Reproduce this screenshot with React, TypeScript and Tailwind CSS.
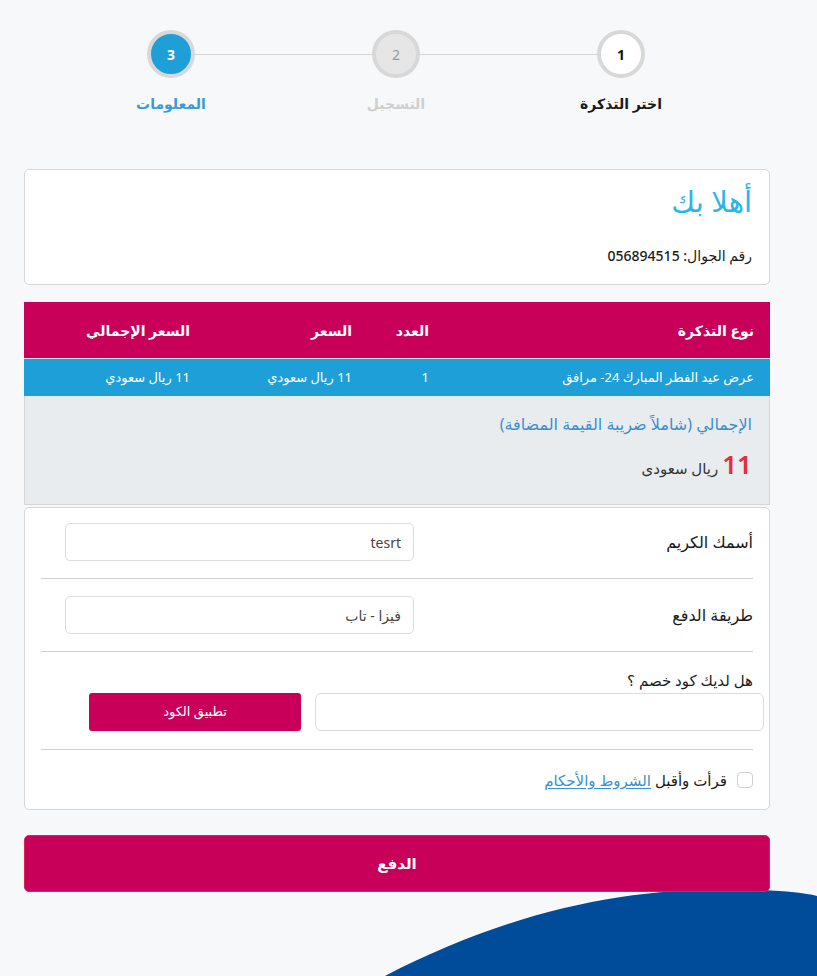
import React from 'react';

const steps = [
  { n: 1, label: 'اختر التذكرة', circle: 'bg-white text-[#111]', text: 'text-[#1a1a1a]' },
  { n: 2, label: 'التسجيل', circle: 'bg-[#e6e6e6] text-[#9a9a9a] font-normal', text: 'text-[#cfcfcf]' },
  { n: 3, label: 'المعلومات', circle: 'bg-[#1e9fd8] text-white', text: 'text-[#3a9ad9]' },
];

function Stepper() {
  return (
    <div className="pt-[30px] pr-[172px]">
      <div className="flex items-center">
        {steps.map((s, i) => (
          <React.Fragment key={s.n}>
            <div className={`w-[48px] h-[48px] shrink-0 rounded-full border-4 border-[#d8d8d8] flex items-center justify-center text-[14px] font-bold ${s.circle}`}>
              {s.n}
            </div>
            {i < steps.length - 1 && <div className="w-[177px] h-px bg-[#d4d4d4]" />}
          </React.Fragment>
        ))}
      </div>
      <div className="flex mt-[15px]">
        {steps.map((s, i) => (
          <React.Fragment key={s.n}>
            <div className="w-[48px] shrink-0 flex justify-center">
              <span className={`whitespace-nowrap text-[14px] font-bold leading-[22px] ${s.text}`}>{s.label}</span>
            </div>
            {i < steps.length - 1 && <div className="w-[177px]" />}
          </React.Fragment>
        ))}
      </div>
    </div>
  );
}

export default function App() {
  return (
    <div dir="rtl" className="relative min-h-[976px] overflow-hidden bg-[#f7f8fa] font-['Noto_Sans','DejaVu_Sans',sans-serif] text-[#1a1a1a]">
      {/* wave */}
      <svg className="absolute bottom-0 right-0" width="434" height="88" viewBox="383 888 434 88">
        <path d="M383 976 C 520 905, 640 884, 760 889 C 785 890, 805 892, 817 895 L 817 976 Z" fill="#004c9b" />
      </svg>

      <div className="relative">
        <Stepper />

        <div className="mr-[47px] ml-[24px] mt-[54px] pb-[85px]">
          {/* welcome */}
          <div className="bg-white border border-[#d6d6d6] rounded-[5px] h-[116px] px-[17px] pt-[13px]">
            <h1 className="text-[29px] leading-[36px] text-[#2bb5e9] font-normal">أهلا بك</h1>
            <p className="mt-[26px] text-[14px] font-medium leading-[22px]">رقم الجوال: 056894515</p>
          </div>

          {/* table */}
          <div className="mt-[17px]">
            <div className="grid grid-cols-[325px_77px_162px_1fr] h-[56px] items-center bg-[#c8005a] text-white text-[14px] font-bold">
              <div className="pr-[16px]">نوع التذكرة</div>
              <div className="pr-[16px]">العدد</div>
              <div className="pr-[16px]">السعر</div>
              <div className="pr-[16px]">السعر الإجمالي</div>
            </div>
            <div className="grid grid-cols-[325px_77px_162px_1fr] h-[38px] items-center bg-[#1e9fd8] text-white text-[13px] border-t border-[#e9e9e9]">
              <div className="pr-[16px]">عرض عيد الفطر المبارك 24- مرافق</div>
              <div className="pr-[16px]">1</div>
              <div className="pr-[16px]">11 ريال سعودي</div>
              <div className="pr-[16px]">11 ريال سعودي</div>
            </div>
            <div className="bg-[#e9ecef] border-x border-b border-[#d6d6d6] h-[109px] px-[17px] pt-[17px]">
              <p className="text-[16px] leading-[22px] text-[#3a8fd0]">الإجمالي (شاملاً ضريبة القيمة المضافة)</p>
              <div className="mt-[14px] flex items-baseline gap-[4px]">
                <span className="text-[26px] leading-[30px] text-[#e0303c] font-semibold">11</span>
                <span className="text-[15px] text-[#333]">ريال سعودى</span>
              </div>
            </div>
          </div>

          {/* form */}
          <div className="mt-[2px] bg-white border border-[#d6d6d6] rounded-[5px] px-[16px] pt-[15px] pb-[17px]">
            <div className="grid grid-cols-[1fr_373px] items-center pb-[17px] border-b border-[#cfcfcf]">
              <label className="text-[16px]">أسمك الكريم</label>
              <div className="ml-[24px] h-[38px] rounded-[5px] border border-[#dcdcdc] flex items-center px-[12px] text-[14px] text-[#444]">tesrt</div>
            </div>
            <div className="grid grid-cols-[1fr_373px] items-center py-[17px] border-b border-[#cfcfcf]">
              <label className="text-[16px]">طريقة الدفع</label>
              <div className="ml-[24px] h-[38px] rounded-[5px] border border-[#dcdcdc] flex items-center px-[12px] text-[14px] text-[#444]">فيزا - تاب</div>
            </div>
            <div className="pt-[17px] pb-[18px] border-b border-[#cfcfcf]">
              <label className="block text-[15px] leading-[22px]">هل لديك كود خصم ؟</label>
              <div className="mt-[2px] flex gap-[14px] -mr-[11px]">
                <div className="w-[449px] h-[38px] rounded-[6px] border border-[#dcdcdc] bg-white" />
                <button className="w-[212px] h-[38px] rounded-[3px] bg-[#c8005a] text-white text-[13px]">تطبيق الكود</button>
              </div>
            </div>
            <label className="flex items-center gap-[10px] pt-[19px] text-[15px]">
              <span className="w-[16px] h-[16px] rounded-[4px] border border-[#cfcfcf] bg-white" />
              <span>
                قرأت وأقبل <a className="text-[#3a8fd0] underline underline-offset-2">الشروط والأحكام</a>
              </span>
            </label>
          </div>

          <button className="mt-[25px] w-full h-[57px] rounded-[5px] bg-[#c8005a] border border-[#d8244f] text-white text-[15px] font-bold">الدفع</button>
        </div>
      </div>
    </div>
  );
}
